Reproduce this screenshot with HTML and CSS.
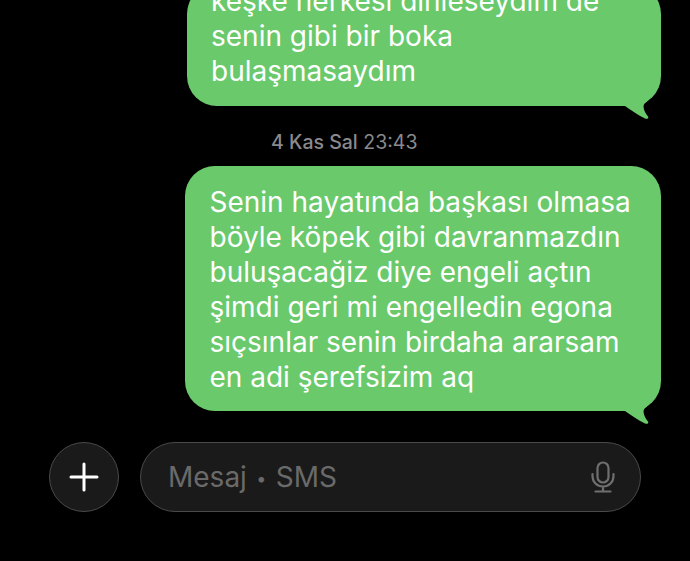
FILE: index.html
```html
<!DOCTYPE html>
<html lang="tr">

<head>
    <meta charset="UTF-8">
    <meta name="viewport" content="width=device-width, initial-scale=1.0">
    <title>Mesaj</title>
    <link rel="stylesheet" href="styles.css">
</head>

<body>
    <div class="screen">
        <div class="thread">
            <div class="bubble bubble-first">
                keşke herkesi dinleseydim de<br>
                senin gibi bir boka<br>
                bulaşmasaydım
                <svg class="tail" width="50" height="40" viewBox="0 0 50 40">
                    <path d="M4 27 L14 27 C20 31 27 36 34 39.500 C36.500 40.300 38 39 37 37.500 C34 34 31.500 29 33 25.500 C34 24 36 22.500 40 18 L24 14 Z" />
                </svg>
            </div>

            <div class="stamp"><b>4 Kas Sal</b> 23:43</div>

            <div class="bubble bubble-second">
                Senin hayatında başkası olmasa<br>
                böyle köpek gibi davranmazdın<br>
                buluşacağiz diye engeli açtın<br>
                şimdi geri mi engelledin egona<br>
                sıçsınlar senin birdaha ararsam<br>
                en adi şerefsizim aq
                <svg class="tail" width="50" height="40" viewBox="0 0 50 40">
                    <path d="M4 27 L14 27 C20 31 27 36 34 39.500 C36.500 40.300 38 39 37 37.500 C34 34 31.500 29 33 25.500 C34 24 36 22.500 40 18 L24 14 Z" />
                </svg>
            </div>
        </div>

        <div class="composer">
            <div class="plus">
                <svg width="30" height="30" viewBox="0 0 30 30">
                    <path d="M15 2 V28 M2 15 H28" />
                </svg>
            </div>
            <div class="field">
                <span class="placeholder">Mesaj <span class="dot">•</span> SMS</span>
                <svg class="mic" width="24" height="32" viewBox="0 0 24 32">
                    <rect x="6.500" y="1.500" width="11" height="20" rx="5.500" />
                    <path d="M1.500 13 V15 C1.500 21 6 25.500 12 25.500 C18 25.500 22.500 21 22.500 15 V13 M12 25.500 V30.500 M4.500 30.500 H19.500" />
                </svg>
            </div>
        </div>
    </div>
</body>

</html>
```

FILE: styles.css
```css
html,
body {
    margin: 0;
    height: 100%;
    background-color: #000;
}

body {
    font-family: Inter, "Noto Sans", sans-serif;
}

.screen {
    width: 690px;
    height: 561px;
    overflow: hidden;
    display: flex;
    flex-direction: column;
}

.thread {
    height: 442px;
    display: flex;
    flex-direction: column;
    align-items: flex-end;
    justify-content: flex-end;
    padding-right: 29px;
    padding-bottom: 31px;
    box-sizing: border-box;
}

.bubble {
    position: relative;
    flex-shrink: 0;
    background-color: #69c96b;
    color: #fff;
    border-radius: 30px;
    box-sizing: border-box;
    font-size: 28px;
    line-height: 35px;
    white-space: nowrap;
}

.bubble-first {
    width: 474px;
    padding: 0 24px 17px 24px;
}

.bubble-second {
    width: 476px;
    padding: 19px 24px 16px 24.500px;
}

.tail {
    position: absolute;
    right: 0;
    bottom: -13px;
}

.tail path {
    fill: #69c96b;
}

.stamp {
    align-self: flex-start;
    margin: 25px 0 13px 271px;
    color: #8a8a8e;
    font-size: 19.500px;
    line-height: 22px;
    white-space: nowrap;
}

.stamp b {
    font-weight: 500;
}

.composer {
    display: flex;
    align-items: center;
    gap: 21px;
    padding-left: 49px;
}

.plus {
    width: 70px;
    height: 70px;
    flex-shrink: 0;
    display: flex;
    align-items: center;
    justify-content: center;
    box-sizing: border-box;
    background-color: #1a1a1a;
    border: 1px solid #4a4a4a;
    border-radius: 50%;
}

.plus path {
    fill: none;
    stroke: #fff;
    stroke-width: 3;
    stroke-linecap: round;
}

.field {
    width: 501px;
    height: 70px;
    display: flex;
    align-items: center;
    justify-content: space-between;
    box-sizing: border-box;
    padding: 0 25px 0 27px;
    background-color: #1a1a1a;
    border: 1px solid #4a4a4a;
    border-radius: 35px;
}

.placeholder {
    color: #6a6a6a;
    font-size: 28px;
    white-space: nowrap;
}

.dot {
    font-size: 18px;
    vertical-align: 2px;
    margin: 0 1.500px;
}

.mic rect,
.mic path {
    fill: none;
    stroke: #6f6f6f;
    stroke-width: 2.200;
    stroke-linecap: round;
}
```
